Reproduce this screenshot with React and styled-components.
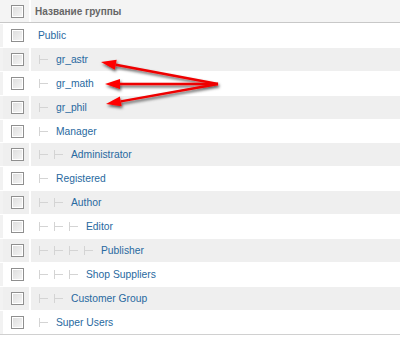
import React from 'react';
import styled, { createGlobalStyle } from 'styled-components';

const GlobalStyle = createGlobalStyle`
  html, body {
    margin: 0;
    padding: 0;
    background: #fff;
  }
  body {
    font-family: "Liberation Sans", Arial, sans-serif;
  }
`;

const Wrapper = styled.div`
  position: relative;
  width: 400px;
  height: 337px;
  overflow: hidden;
`;

const Table = styled.div`
  display: flex;
  flex-direction: column;
  border-bottom: 1px solid #d0d0d0;
`;

const HeaderRow = styled.div`
  display: flex;
  height: 22px;
  background: #f4f4f4;
  border-bottom: 1px solid #c8c8c8;
`;

const HeaderCheckCell = styled.div`
  width: 31px;
  display: flex;
  align-items: center;
  justify-content: center;
  padding-left: 6px;
  box-sizing: border-box;
  border-right: 2px solid #fff;
`;

const HeaderTitle = styled.div`
  flex: 1;
  display: flex;
  align-items: center;
  padding-left: 4px;
  font-size: 10px;
  font-weight: bold;
  color: #666;
`;

const Row = styled.div`
  display: flex;
  height: 23.9px;
  box-sizing: border-box;
  border-top: 1px solid #fff;
  background: ${(p) => (p.$striped ? '#efefef' : '#fff')};
`;

const CheckCell = styled.div`
  width: 31px;
  display: flex;
  align-items: center;
  justify-content: center;
  padding-left: 3px;
  box-sizing: border-box;
  border-right: 2px solid #fff;
  border-left: 3px solid #f2f2f2;
`;

const NameCell = styled.div`
  flex: 1;
  display: flex;
  align-items: center;
  padding-left: ${(p) => (p.$level === 0 ? 7 : 8)}px;
  font-size: 10.3px;
  color: #2869a0;
`;

const Checkbox = styled.span`
  display: inline-block;
  width: 11px;
  height: 11px;
  border: 1px solid #8f8f8f;
  background: linear-gradient(135deg, #dcdcdc 0%, #f6f6f6 100%);
  box-shadow: inset 0 0 0 1px #fff;
`;

const TreeMark = styled.span`
  position: relative;
  display: inline-block;
  width: 15px;
  height: 9px;
  flex-shrink: 0;
  &::before {
    content: '';
    position: absolute;
    left: 0;
    top: 0;
    width: 1px;
    height: 9px;
    background: #d4d4d4;
  }
  &::after {
    content: '';
    position: absolute;
    left: 1px;
    top: 4px;
    width: 8px;
    height: 1px;
    background: #d4d4d4;
  }
`;

const Label = styled.span`
  margin-left: ${(p) => (p.$level === 0 ? 0 : 2)}px;
`;

const Arrows = styled.svg`
  position: absolute;
  left: 0;
  top: 0;
  pointer-events: none;
`;

const groups = [
  { name: 'Public', level: 0 },
  { name: 'gr_astr', level: 1 },
  { name: 'gr_math', level: 1 },
  { name: 'gr_phil', level: 1 },
  { name: 'Manager', level: 1 },
  { name: 'Administrator', level: 2 },
  { name: 'Registered', level: 1 },
  { name: 'Author', level: 2 },
  { name: 'Editor', level: 3 },
  { name: 'Publisher', level: 4 },
  { name: 'Shop Suppliers', level: 3 },
  { name: 'Customer Group', level: 2 },
  { name: 'Super Users', level: 1 },
];

const Arrow = ({ x1, y1, x2, y2 }) => {
  const a = Math.atan2(y2 - y1, x2 - x1);
  const len = 15;
  const w = 5;
  const bx = x2 - Math.cos(a) * len;
  const by = y2 - Math.sin(a) * len;
  const px = -Math.sin(a) * w;
  const py = Math.cos(a) * w;
  return (
    <g>
      <line x1={x1} y1={y1} x2={bx} y2={by} stroke="#e00" strokeWidth="2.4" />
      <polygon
        points={`${x2},${y2} ${bx + px},${by + py} ${bx - px},${by - py}`}
        fill="#f00"
      />
    </g>
  );
};

const App = () => {
  return (
    <Wrapper>
      <GlobalStyle />
      <Table>
        <HeaderRow>
          <HeaderCheckCell>
            <Checkbox />
          </HeaderCheckCell>
          <HeaderTitle>Название группы</HeaderTitle>
        </HeaderRow>
        {groups.map((g, i) => (
          <Row key={g.name} $striped={i % 2 === 1}>
            <CheckCell>
              <Checkbox />
            </CheckCell>
            <NameCell $level={g.level}>
              {Array.from({ length: g.level }).map((_, k) => (
                <TreeMark key={k} />
              ))}
              <Label $level={g.level}>{g.name}</Label>
            </NameCell>
          </Row>
        ))}
      </Table>
      <Arrows width="400" height="337" viewBox="0 0 400 337">
        <defs>
          <filter id="shadow" x="-10%" y="-50%" width="120%" height="200%">
            <feDropShadow dx="1" dy="2" stdDeviation="1.5" floodColor="#000" floodOpacity="0.65" />
          </filter>
        </defs>
        <g filter="url(#shadow)">
          <Arrow x1={218} y1={84} x2={101} y2={62} />
          <Arrow x1={218} y1={84} x2={105} y2={84} />
          <Arrow x1={218} y1={84} x2={106} y2={104} />
        </g>
      </Arrows>
    </Wrapper>
  );
};

export default App;
